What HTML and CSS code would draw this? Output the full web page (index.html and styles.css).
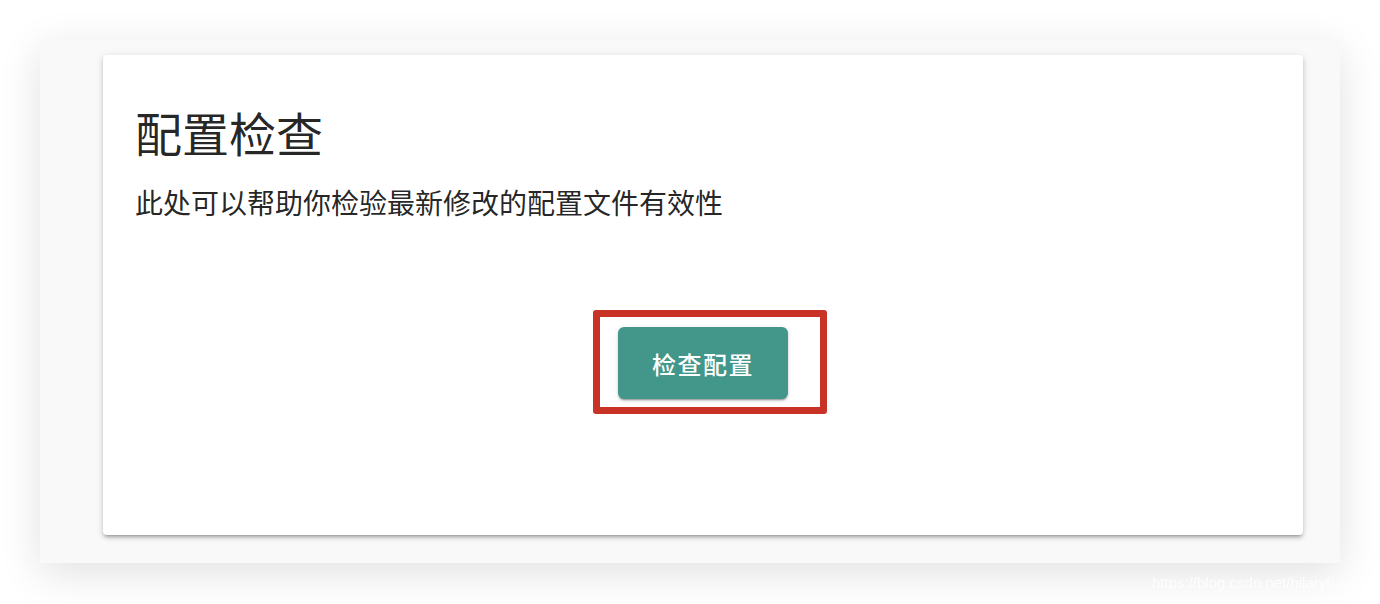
FILE: index.html
```html
<!DOCTYPE html>
<html lang="zh-CN">
<head>
<meta charset="utf-8">
<title>配置检查</title>
<link rel="stylesheet" href="styles.css">
</head>
<body>
<div class="panel">
  <div class="card">
    <div class="card-text">
      <h1 class="title">配置检查</h1>
      <p class="subtitle">此处可以帮助你检验最新修改的配置文件有效性</p>
    </div>
    <div class="actions">
      <div class="btn-wrap">
        <button class="btn">检查配置</button>
        <span class="highlight"></span>
      </div>
    </div>
  </div>
</div>
<div class="watermark">https://blog.csdn.net/hilaryfrank</div>
</body>
</html>
```

FILE: styles.css
```css
html, body {
  margin: 0;
  padding: 0;
  background: #ffffff;
}
body {
  width: 1380px;
  height: 604px;
  overflow: hidden;
  position: relative;
  font-family: "Noto Sans CJK SC", "Noto Sans", sans-serif;
}
.panel {
  margin: 40px 40px 0 40px;
  width: 1300px;
  height: 523px;
  box-sizing: border-box;
  padding: 15px 37px 0 63px;
  background: #f9f9f9;
  box-shadow: 0 10px 40px rgba(0, 0, 0, 0.12);
}
.card {
  width: 1200px;
  height: 480px;
  box-sizing: border-box;
  background: #ffffff;
  border-radius: 4px;
  box-shadow: 0 3px 3px -2px rgba(0,0,0,0.25), 0 3px 4px 0 rgba(0,0,0,0.16), 0 1px 8px 0 rgba(0,0,0,0.10);
  padding: 49px 32px 0 32px;
  display: flex;
  flex-direction: column;
}
.title {
  margin: 0;
  font-size: 47px;
  font-weight: 400;
  line-height: 56px;
  color: rgba(0, 0, 0, 0.87);
}
.subtitle {
  margin: 24px 0 0 0;
  font-size: 28px;
  line-height: 36px;
  color: rgba(0, 0, 0, 0.87);
}
.actions {
  display: flex;
  justify-content: center;
  margin-top: 107px;
}
.btn-wrap {
  position: relative;
}
.btn {
  width: 170px;
  height: 72px;
  border: none;
  border-radius: 6px;
  background: #42968a;
  color: #ffffff;
  font-family: "Noto Sans CJK SC", "Noto Sans", sans-serif;
  font-size: 24px;
  font-weight: 500;
  letter-spacing: 1.5px;
  box-shadow: 0 3px 1px -2px rgba(0,0,0,0.2), 0 2px 2px 0 rgba(0,0,0,0.14), 0 1px 5px 0 rgba(0,0,0,0.12);
  display: block;
  padding: 0;
}
.highlight {
  position: absolute;
  left: -25px;
  top: -17px;
  width: 234px;
  height: 104px;
  box-sizing: border-box;
  border: 7px solid #c93325;
  border-radius: 3px;
}
.watermark {
  position: absolute;
  left: 1152px;
  top: 574px;
  white-space: nowrap;
  font-family: "Liberation Sans", Arial, sans-serif;
  font-size: 15px;
  color: rgba(255, 255, 255, 0.8);
  -webkit-mask-image: linear-gradient(to right, #000 80%, rgba(0,0,0,0.2) 100%);
  mask-image: linear-gradient(to right, #000 80%, rgba(0,0,0,0.2) 100%);
}
```
